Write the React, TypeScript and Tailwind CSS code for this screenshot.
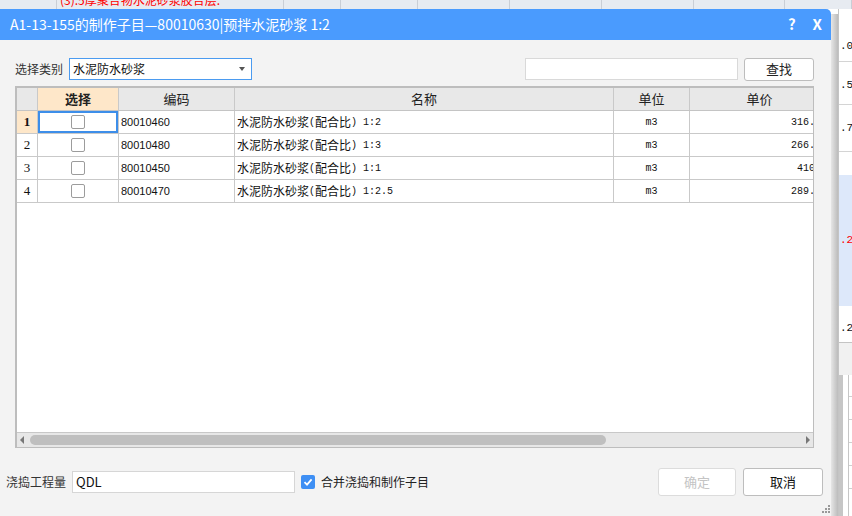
import React from "react";

type Row = { n: number; code: string; name: string; unit: string; price: string };

const rows: Row[] = [
  { n: 1, code: "80010460", name: "水泥防水砂浆(配合比) 1:2", unit: "m3", price: "316.18" },
  { n: 2, code: "80010480", name: "水泥防水砂浆(配合比) 1:3", unit: "m3", price: "266.53" },
  { n: 3, code: "80010450", name: "水泥防水砂浆(配合比) 1:1", unit: "m3", price: "410.5" },
  { n: 4, code: "80010470", name: "水泥防水砂浆(配合比) 1:2.5", unit: "m3", price: "289.24" },
];

// split a name into CJK / half-width runs so the ascii part gets the fixed-width look
function Name({ text }: { text: string }) {
  const parts = text.match(/[\x20-\x7e]+|[^\x20-\x7e]+/g) ?? [];
  return (
    <>
      {parts.map((p, i) =>
        /^[\x20-\x7e]+$/.test(p) ? (
          <span key={i} className="font-['Liberation_Mono',monospace] text-[10px] whitespace-pre">
            {p}
          </span>
        ) : (
          <span key={i}>{p}</span>
        ),
      )}
    </>
  );
}

// the spreadsheet peeking out behind the dialog
function BackSheet() {
  const cols = [57, 227, 57, 77, 92, 92, 92, 91, 67];
  return (
    <>
      <div className="absolute left-0 top-0 w-[852px] h-[9px] flex overflow-hidden bg-[#e7ebf1]">
        {cols.map((w, i) => (
          <div
            key={i}
            style={{ width: w }}
            className="shrink-0 h-full border-r border-[#c9ced6] overflow-hidden"
          >
            {i === 1 && (
              <div className="-mt-[7px] pl-[3px] text-[12px] leading-[14px] text-[#ff0000] whitespace-nowrap">
                (3).5厚聚合物水泥砂浆胶合层:
              </div>
            )}
          </div>
        ))}
      </div>
      <div className="absolute left-[838px] top-[9px] w-[14px] h-[507px] flex flex-col bg-white border-l border-[#c4c4c4] overflow-hidden text-[11px] font-['Liberation_Mono',monospace] text-[#111]">
        <div className="h-[53px] border-b border-[#d4d4d4] flex items-end pb-[7px] pl-[1px]">.05</div>
        <div className="h-[43px] border-b border-[#d4d4d4] flex items-center pt-[4px] pl-[1px]">.50</div>
        <div className="h-[47px] border-b border-[#d4d4d4] flex items-center pl-[1px]">.76</div>
        <div className="h-[23px]" />
        <div className="h-[131px] bg-[#dde8fa] flex items-center pl-[1px] text-[#ff0000]">.28</div>
        <div className="h-[37px] border-b border-[#c4c4c4] flex items-end pb-[6px] pl-[1px]">.21</div>
        <div className="h-[32px] bg-[#f1f1f1]" />
        <div className="flex-1 flex">
          <div className="w-[4px] bg-[#c6c6c6] shrink-0" />
          <div className="w-[5px] shrink-0" />
          <div className="flex-1 border-l border-[#c6c6c6] flex flex-col">
            <div className="h-[22px] border-b border-[#d0d0d0]" />
            <div className="h-[23px] border-b border-[#d0d0d0]" />
            <div className="h-[23px] border-b border-[#d0d0d0]" />
            <div className="h-[23px] border-b border-[#d0d0d0]" />
            <div className="h-[23px] border-b border-[#d0d0d0]" />
          </div>
        </div>
      </div>
    </>
  );
}

function Box({ checked }: { checked?: boolean }) {
  if (checked) {
    return (
      <div className="w-[14px] h-[14px] rounded-[2px] bg-[#3e8ff4] flex items-center justify-center shrink-0">
        <svg width="10" height="10" viewBox="0 0 10 10">
          <polyline points="1.5,5.2 4,7.6 8.6,2.4" fill="none" stroke="#fff" strokeWidth="1.8" />
        </svg>
      </div>
    );
  }
  return <div className="w-[14px] h-[14px] rounded-[2px] border border-[#9c9c9c] bg-white" />;
}

function Grid() {
  const cell = "shrink-0 h-full border-r border-[#c9c9c9] flex items-center";
  return (
    <div className="ml-[15px] mt-[6px] w-[799px] h-[362px] flex flex-col bg-white border-l-2 border-t-2 border-r border-b border-[#bdbdbd] overflow-hidden">
      <div className="h-[23px] shrink-0 flex bg-[#e8e8e8] border-b border-[#c4c4c4] text-[13px] text-[#222]">
        <div className={`${cell} w-[21px]`} />
        <div className={`${cell} w-[81px] justify-center bg-[#fee7c9] font-bold`}>选择</div>
        <div className={`${cell} w-[116px] justify-center`}>编码</div>
        <div className={`${cell} w-[379px] justify-center`}>名称</div>
        <div className={`${cell} w-[76px] justify-center`}>单位</div>
        <div className={`${cell} w-[140px] justify-center`}>单价</div>
      </div>
      {rows.map((r) => (
        <div key={r.n} className="h-[23px] shrink-0 flex border-b border-[#c9c9c9] text-[12px] text-[#111]">
          <div
            className={`${cell} w-[21px] justify-center font-['Liberation_Serif',serif] text-[13px] ${
              r.n === 1 ? "bg-[#fee7c9] font-bold" : ""
            }`}
          >
            {r.n}
          </div>
          <div
            className={`${cell} w-[81px] justify-center ${
              r.n === 1 ? "ring-2 ring-inset ring-[#3d8ee9]" : ""
            }`}
          >
            <Box />
          </div>
          <div className={`${cell} w-[116px] pl-[2px] font-['Liberation_Sans',sans-serif] text-[11px]`}>
            {r.code}
          </div>
          <div className={`${cell} w-[379px] pl-[2px] whitespace-nowrap`}>
            <Name text={r.name} />
          </div>
          <div className={`${cell} w-[76px] justify-center font-['Liberation_Mono',monospace] text-[10px]`}>
            {r.unit}
          </div>
          <div className={`${cell} w-[140px] justify-end pr-[2px] font-['Liberation_Mono',monospace] text-[10px]`}>
            {r.price}
          </div>
        </div>
      ))}
      <div className="flex-1" />
      <div className="h-[15px] shrink-0 flex items-center bg-[#e7e7e7] border-t border-[#c8c8c8] pl-[3px] pr-[3px]">
        <div className="w-0 h-0 border-y-[4px] border-y-transparent border-r-[4px] border-r-[#777]" />
        <div className="ml-[6px] w-[576px] h-[10px] rounded-full bg-[#bfbfbf]" />
        <div className="ml-auto w-0 h-0 border-y-[4px] border-y-transparent border-l-[4px] border-l-[#777]" />
      </div>
    </div>
  );
}

function Dialog() {
  return (
    <div className="absolute left-0 top-[9px] w-[831px] h-[507px] flex flex-col bg-[#f3f3f3] rounded-tr-[5px] overflow-hidden">
      <div className="h-[31px] shrink-0 flex items-center bg-[#4a9bfe] pl-[10px] pr-[9px] text-white">
        <span className="text-[14px] whitespace-nowrap">A1-13-155的制作子目—80010630|预拌水泥砂浆 1:2</span>
        <span className="ml-auto text-[15px] font-bold">?</span>
        <span className="ml-[17px] text-[15px] font-bold">X</span>
      </div>

      <div className="mt-[18px] h-[22px] flex items-center pl-[15px] pr-[17px] text-[12px] text-[#333]">
        <span className="w-[54px] shrink-0">选择类别</span>
        <div className="w-[183px] h-[22px] flex items-center pl-[3px] pr-[6px] bg-white border border-[#4b9bf0] text-[#111]">
          <span>水泥防水砂浆</span>
          <div className="ml-auto w-0 h-0 border-x-[3.5px] border-x-transparent border-t-[4px] border-t-[#555]" />
        </div>
        <div className="ml-auto w-[213px] h-[22px] bg-white border border-[#d9d9d9]" />
        <button className="ml-[6px] w-[70px] h-[23px] bg-white border border-[#bdbdbd] rounded-[3px] text-[13px] text-[#222]">
          查找
        </button>
      </div>

      <Grid />

      <div className="mt-[20px] h-[28px] flex items-center pl-[6px] pr-[8px] text-[12px] text-[#333]">
        <span className="w-[66px] shrink-0">浇捣工程量</span>
        <div className="w-[223px] h-[22px] flex items-center pl-[3px] bg-white border border-[#d6d6d6] text-[13px] text-[#111]">
          QDL
        </div>
        <div className="ml-[6px]">
          <Box checked />
        </div>
        <span className="ml-[6px] text-[#222]">合并浇捣和制作子目</span>
        <button className="ml-auto w-[78px] h-[28px] bg-white border border-[#dcdcdc] rounded-[3px] text-[13px] text-[#c4c4c4]">
          确定
        </button>
        <button className="ml-[7px] w-[80px] h-[28px] bg-white border border-[#bdbdbd] rounded-[3px] text-[13px] text-[#111]">
          取消
        </button>
      </div>

      <div className="mt-auto mb-[3px] mr-[1px] self-end grid grid-cols-3 gap-[1px] w-[8px]">
        <span />
        <span />
        <span className="w-[2px] h-[2px] bg-[#999]" />
        <span />
        <span className="w-[2px] h-[2px] bg-[#999]" />
        <span className="w-[2px] h-[2px] bg-[#999]" />
        <span className="w-[2px] h-[2px] bg-[#999]" />
        <span className="w-[2px] h-[2px] bg-[#999]" />
        <span className="w-[2px] h-[2px] bg-[#999]" />
      </div>
    </div>
  );
}

export default function App() {
  return (
    <div className="relative w-[852px] h-[516px] overflow-hidden bg-white font-['Noto_Sans_CJK_SC',sans-serif]">
      <BackSheet />
      <div className="absolute left-[831px] top-[14px] w-[7px] h-[502px] bg-linear-to-r from-[#e6e6e6] to-[#bcbcbc]" />
      <Dialog />
    </div>
  );
}
